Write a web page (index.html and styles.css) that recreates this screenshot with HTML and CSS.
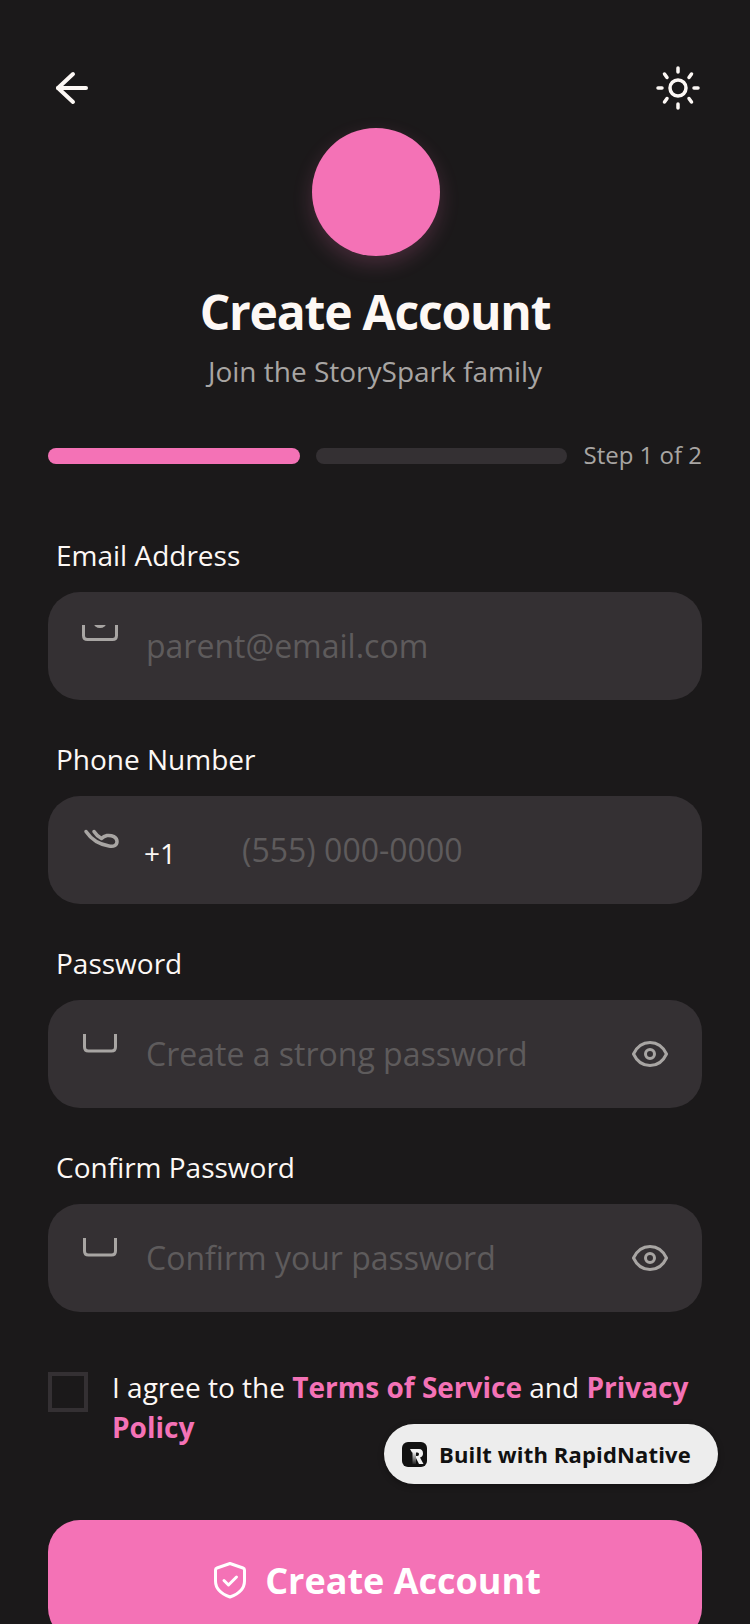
FILE: index.html
```html
<!DOCTYPE html>
<html lang="en">
<head>
    <meta charset="UTF-8">
    <title>Create Account</title>
    <link rel="stylesheet" href="styles.css">
</head>
<body>
    <div class="screen">
        <div class="topbar">
            <svg class="back" width="40" height="40" viewBox="0 0 40 40" fill="none" stroke="#fdf8f5" stroke-width="4" stroke-linecap="round" stroke-linejoin="round">
                <path d="M34 20H6"/>
                <path d="M21 6L6 20L21 34"/>
            </svg>
            <svg class="sun" width="48" height="48" viewBox="0 0 48 48" fill="none" stroke="#fdf8f5" stroke-width="3.500" stroke-linecap="round">
                <circle cx="24" cy="24" r="8"/>
                <path d="M24 4v4M24 40v4M4 24h4M40 24h4"/>
                <path d="M10.500 10l2.500 3.500M35 34.500l2.500 3.500M37.500 10l-2.500 3.500M13 34.500l-2.500 3.500"/>
            </svg>
        </div>

        <div class="hero">
            <div class="logo"></div>
            <h1>Create Account</h1>
            <p>Join the StorySpark family</p>
        </div>

        <div class="steps">
            <div class="step active"></div>
            <div class="step"></div>
            <span class="step-text">Step 1 of 2</span>
        </div>

        <div class="field">
            <label>Email Address</label>
            <div class="box">
                <svg class="ico" width="40" height="40" viewBox="0 0 40 40" fill="none" stroke="#a8a5a3" stroke-width="3" stroke-linejoin="round">
                    <path d="M3.500 0v10.500q0 4 4 4h25q4 0 4-4V0"/>
                    <path d="M16 0q4 3 8 0" stroke-linecap="round"/>
                </svg>
                <span class="ph">parent@email.com</span>
            </div>
        </div>

        <div class="field">
            <label>Phone Number</label>
            <div class="box">
                <svg class="ico" width="40" height="40" viewBox="0 0 40 40" fill="none" stroke="#a8a5a3" stroke-width="3.500" stroke-linecap="round" stroke-linejoin="round">
                    <path d="M6 2.500C11 10 20 15.500 29 17C34 18 37 16 37 12.500C37 8 32 6 27 6.500C25 7 23 8 21.500 9.500C18 7.500 15.500 5 14 2.500"/>
                </svg>
                <span class="code">+1</span>
                <span class="ph">(555) 000-0000</span>
            </div>
        </div>

        <div class="field">
            <label>Password</label>
            <div class="box">
                <svg class="ico" width="40" height="40" viewBox="0 0 40 40" fill="none" stroke="#a8a5a3" stroke-width="3" stroke-linejoin="round">
                    <path d="M4.500 1v13q0 4 4 4h23q4 0 4-4V1"/>
                </svg>
                <span class="ph">Create a strong password</span>
                <svg class="eye" width="40" height="40" viewBox="0 0 40 40" fill="none" stroke="#a8a5a3" stroke-width="3">
                    <path d="M3.500 20C7 12.500 13 8.500 20 8.500S33 12.500 36.500 20C33 27.500 27 31.500 20 31.500S7 27.500 3.500 20z"/>
                    <circle cx="20" cy="20" r="4.500"/>
                </svg>
            </div>
        </div>

        <div class="field">
            <label>Confirm Password</label>
            <div class="box">
                <svg class="ico" width="40" height="40" viewBox="0 0 40 40" fill="none" stroke="#a8a5a3" stroke-width="3" stroke-linejoin="round">
                    <path d="M4.500 1v13q0 4 4 4h23q4 0 4-4V1"/>
                </svg>
                <span class="ph">Confirm your password</span>
                <svg class="eye" width="40" height="40" viewBox="0 0 40 40" fill="none" stroke="#a8a5a3" stroke-width="3">
                    <path d="M3.500 20C7 12.500 13 8.500 20 8.500S33 12.500 36.500 20C33 27.500 27 31.500 20 31.500S7 27.500 3.500 20z"/>
                    <circle cx="20" cy="20" r="4.500"/>
                </svg>
            </div>
        </div>

        <div class="terms">
            <div class="check"></div>
            <p>I agree to the <b>Terms of Service</b> and <b>Privacy Policy</b></p>
        </div>

        <button class="submit">
            <svg width="36" height="40" viewBox="0 0 36 40" fill="none" stroke="#fff" stroke-width="3" stroke-linecap="round" stroke-linejoin="round">
                <path d="M18 3.500L31 8q1.500 .5 1.500 2v11c0 8-6 13-14.500 16C9.500 34 3.500 29 3.500 21V10q0-1.500 1.500-2z"/>
                <path d="M12 20.500l4.500 4.500l8-8"/>
            </svg>
            Create Account
        </button>

        <div class="badge">
            <svg class="badge-logo" width="25" height="25" viewBox="0 0 25 25">
                <defs>
                    <linearGradient id="stem" x1="0" y1="0" x2="0" y2="1">
                        <stop offset="0" stop-color="#f2f2f2"/>
                        <stop offset="1" stop-color="#222"/>
                    </linearGradient>
                </defs>
                <rect width="25" height="25" rx="6" fill="#111"/>
                <path d="M8 7H17Q21 7 21 11.500Q21 14.500 18 15.500L21.500 22H17L13 14H15.500Q17 14 17 12Q17 10.500 15.500 10.500H10Z" fill="#f2f2f2"/>
                <rect x="10.500" y="10" width="3.500" height="12" fill="url(#stem)"/>
            </svg>
            <span>Built with RapidNative</span>
        </div>
    </div>
</body>
</html>
```

FILE: styles.css
```css
*{
    box-sizing: border-box;
}
html, body{
    margin: 0;
    padding: 0;
}
body{
    background-color: #1b191a;
    font-family: "Open Sans", "Noto Sans", sans-serif;
    color: #fff;
}
.screen{
    position: relative;
    width: 750px;
    height: 1624px;
    overflow: hidden;
    padding: 64px 48px 0;
}
.topbar{
    display: flex;
    justify-content: space-between;
    align-items: center;
    height: 48px;
    padding-left: 4px;
}
.hero{
    display: flex;
    flex-direction: column;
    align-items: center;
    margin-top: 16px;
}
.logo{
    width: 128px;
    height: 128px;
    margin-left: 2px;
    border-radius: 50%;
    background-color: #f472b6;
    box-shadow: 0 8px 20px rgba(244, 114, 182, 0.2);
}
h1{
    margin: 24px 0 0;
    font-size: 48px;
    line-height: 64px;
    font-weight: 700;
    letter-spacing: -1.2px;
    color: #fdf8f5;
}
.hero p{
    margin: 7px 0 0;
    font-size: 28px;
    line-height: 40px;
    color: #a8a5a3;
}
.steps{
    display: flex;
    align-items: center;
    gap: 16px;
    margin-top: 49px;
    height: 32px;
}
.step{
    flex: 1;
    height: 16px;
    border-radius: 8px;
    background-color: #343033;
}
.step.active{
    background-color: #f472b6;
}
.step-text{
    margin-bottom: 4px;
    font-size: 24px;
    color: #a8a5a3;
}
.field{
    margin-top: 63px;
}
.field label{
    display: block;
    padding-left: 8px;
    font-size: 28px;
    line-height: 40px;
    color: #fdf8f5;
}
.field + .field{
    margin-top: 39px;
}
.box{
    display: flex;
    align-items: flex-start;
    height: 108px;
    margin-top: 17px;
    padding: 33px 32px 0;
    border-radius: 32px;
    background-color: #343033;
}
.ico{
    flex: none;
    margin-right: 26px;
}
.ph{
    font-size: 32px;
    line-height: 44px;
    margin-top: -1px;
    color: #5e5b5c;
}
.code{
    font-size: 28px;
    line-height: 40px;
    margin: 4px 66px 0 -2px;
    color: #fdf8f5;
}
.eye{
    flex: none;
    margin: 1px 0 0 auto;
}
.terms{
    display: flex;
    gap: 24px;
    margin-top: 55px;
}
.check{
    flex: none;
    width: 40px;
    height: 40px;
    margin-top: 5px;
    border: 4px solid #343033;
}
.terms p{
    margin: 0;
    font-size: 28px;
    line-height: 40px;
    color: #fdf8f5;
}
.terms b{
    color: #f472b6;
    font-weight: 700;
}
.submit{
    display: flex;
    justify-content: center;
    align-items: center;
    gap: 17px;
    width: 100%;
    height: 120px;
    margin-top: 73px;
    padding-left: 9px;
    border: none;
    border-radius: 32px;
    background-color: #f472b6;
    color: #fff;
    font-family: inherit;
    font-size: 36px;
    font-weight: 700;
}
.badge{
    position: absolute;
    left: 384px;
    top: 1424px;
    display: flex;
    align-items: center;
    gap: 12px;
    width: 334px;
    height: 60px;
    padding-left: 18px;
    border-radius: 30px;
    background-color: #ededed;
    color: #111;
    font-size: 22px;
    letter-spacing: 0.15px;
    font-weight: 700;
    box-shadow: 0 2px 6px rgba(0, 0, 0, 0.3);
}
```
